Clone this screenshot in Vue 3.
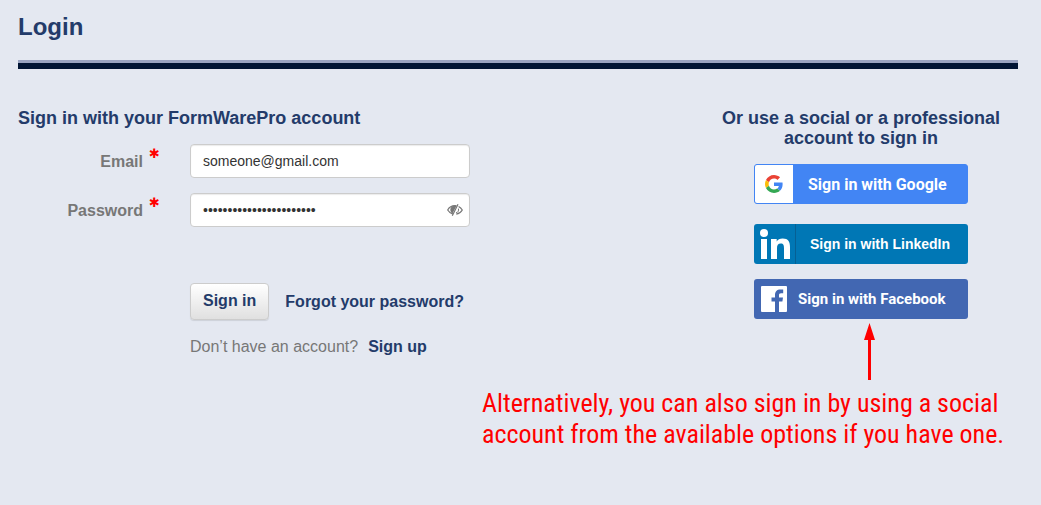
<script setup>
import { ref } from 'vue'

const email = ref('someone@gmail.com')
const password = ref('correcthorsebatterystap')
</script>

<template>
  <main class="page">
    <header class="head">
      <h1>Login</h1>
    </header>

    <div class="columns">
      <form class="account" @submit.prevent>
        <h2>Sign in with your FormWarePro account</h2>
        <div class="row">
          <label for="email">Email</label>
          <span class="star" aria-hidden="true">✱</span>
          <div class="field">
            <input id="email" v-model="email" type="text" />
          </div>
        </div>
        <div class="row">
          <label for="password">Password</label>
          <span class="star" aria-hidden="true">✱</span>
          <div class="field">
            <input id="password" v-model="password" type="password" />
            <button class="eye" type="button" aria-label="Show password">
              <svg viewBox="0 0 16 12" width="16" height="12">
                <path d="M6 10.100C3.500 9.500 1.700 7.700.7 6 2 3.600 4.700 1.700 8 1.700q.8 0 1.500.15M11.600 2.500C13.300 3.400 14.500 4.700 15.300 6c-1.300 2.300-3.300 3.800-6 4.200" fill="none" stroke="#777" stroke-width="1.200" />
                <path d="M9.500 2.100A4 4 0 0 0 5.500 9.500Z" fill="#777" />
                <path d="M11.400 4.600A3.600 3.600 0 0 1 9 8.900" fill="none" stroke="#777" stroke-width="1" />
                <path d="M11 .3 5.300 11.700" stroke="#777" stroke-width="1.200" />
              </svg>
            </button>
          </div>
        </div>
        <div class="actions">
          <button class="submit" type="submit">Sign in</button>
          <a href="#forgot">Forgot your password?</a>
        </div>
        <p class="signup">Don’t have an account?<a href="#signup">Sign up</a></p>
      </form>

      <section class="social">
        <h2>Or use a social or a professional account to sign in</h2>
        <button class="brand google" type="button">
          <span class="tile">
            <svg viewBox="0 0 48 48" width="18" height="18">
              <path fill="#ea4335" d="M24 9.500c3.540 0 6.710 1.220 9.210 3.600l6.850-6.850C35.900 2.380 30.470 0 24 0 14.620 0 6.510 5.380 2.560 13.220l7.980 6.190C12.430 13.720 17.740 9.500 24 9.500z" />
              <path fill="#4285f4" d="M46.980 24.550c0-1.570-.15-3.090-.38-4.550H24v9.020h12.940c-.58 2.960-2.260 5.480-4.780 7.180l7.730 6c4.510-4.180 7.090-10.360 7.090-17.650z" />
              <path fill="#fbbc05" d="M10.530 28.590c-.48-1.450-.76-2.990-.76-4.590s.27-3.140.76-4.590l-7.980-6.190C.92 16.460 0 20.120 0 24c0 3.880.92 7.540 2.560 10.780l7.970-6.190z" />
              <path fill="#34a853" d="M24 48c6.480 0 11.930-2.130 15.890-5.810l-7.730-6c-2.150 1.450-4.920 2.300-8.160 2.300-6.260 0-11.570-4.220-13.470-9.910l-7.980 6.190C6.510 42.620 14.620 48 24 48z" />
            </svg>
          </span>
          <span class="text">Sign in with Google</span>
        </button>
        <button class="brand linkedin" type="button">
          <span class="tile">
            <svg viewBox="0 0 30 30" width="30" height="30" fill="#fff">
              <circle cx="4" cy="4" r="4" />
              <path d="M1 10h6v20H1zM11 10h5.700v2.600c1-1.800 3.100-3.100 6-3.100 5.500 0 7.300 3.300 7.300 8.600V30h-6V19.200c0-2.700-.5-4.600-3.200-4.600-2.900 0-3.800 2-3.800 4.600V30h-6z" />
            </svg>
          </span>
          <span class="text">Sign in with LinkedIn</span>
        </button>
        <button class="brand facebook" type="button">
          <span class="tile">
            <svg viewBox="0 0 26 26" width="26" height="26">
              <rect width="26" height="26" rx="1" fill="#fff" />
              <path d="M14 26V15.500h-3.500v-4H14V9c0-3.500 2-5.500 5.300-5.500h2.900v3.700h-2.100c-1.700 0-2.100.9-2.100 2.200v2.100h4l-.6 4H18V26z" fill="#4267b2" />
            </svg>
          </span>
          <span class="text">Sign in with Facebook</span>
        </button>
        <svg class="arrow" viewBox="0 0 12 57" width="12" height="57" fill="#f00" aria-hidden="true">
          <path d="M5.500 0 11 17H7V57H4V17H0Z" />
        </svg>
      </section>
    </div>

    <p class="note">Alternatively, you can also sign in by using a social<br />account from the available options if you have one.</p>
  </main>
</template>

<style>
body {
  margin: 0;
  background: #e4e8f1;
}
</style>

<style scoped>
.page {
  padding: 12px 23px 24px 18px;
  font-family: "Liberation Sans", Arial, sans-serif;
  font-size: 16px;
  color: #777;
}

h1,
h2,
p {
  margin: 0;
}

h1,
h2,
a {
  color: #233b6a;
  font-weight: bold;
}

a {
  text-decoration: none;
}

h1 {
  font-size: 24px;
  line-height: 30px;
}

h2 {
  font-size: 18px;
  line-height: 20px;
}

button {
  padding: 0;
  border: 0;
  font-family: inherit;
  cursor: pointer;
}

.head {
  padding-bottom: 21px;
  border-bottom: 6px solid #001434;
  box-shadow: inset 0 -3px #99a3c1;
}

.columns {
  display: flex;
  justify-content: space-between;
  padding-top: 39px;
}

.account {
  width: 452px;
}

.row {
  display: flex;
  align-items: center;
  margin-bottom: 15px;
}

h2 + .row {
  margin-top: 16px;
}

.row label {
  width: 125px;
  padding-top: 2px;
  text-align: right;
  font-weight: bold;
}

.star {
  align-self: flex-start;
  width: 12px;
  margin: 3px 29px 0 6px;
  color: #f00;
  font-family: "DejaVu Sans", sans-serif;
  font-size: 13px;
  font-weight: bold;
  line-height: 14px;
}

.field {
  display: flex;
  align-items: center;
  box-sizing: border-box;
  flex: 1;
  height: 34px;
  padding: 0 6px 0 12px;
  border: 1px solid #ccc;
  border-radius: 4px;
  background: #fff;
  box-shadow: inset 0 1px 1px rgba(0, 0, 0, 0.08);
}

.field input {
  flex: 1;
  min-width: 0;
  padding: 0;
  border: 0;
  outline: 0;
  background: none;
  color: #333;
  font-family: inherit;
  font-size: 14px;
  line-height: 20px;
}

.eye {
  display: flex;
  background: none;
}

.actions {
  display: flex;
  align-items: center;
  gap: 16px;
  margin: 56px 0 0 172px;
}

.submit {
  height: 37px;
  padding: 0 12px 2px;
  border: 1px solid #ccc;
  border-radius: 4px;
  background: linear-gradient(#fff, #e0e0e0);
  box-shadow: 0 1px 1px rgba(0, 0, 0, 0.1);
  color: #233b6a;
  font-size: 16px;
  font-weight: bold;
}

.signup {
  margin: 17px 0 0 172px;
  line-height: 20px;
}

.signup a {
  margin-left: 10px;
}

.social {
  display: flex;
  flex-direction: column;
  align-items: center;
  width: 280px;
  margin-right: 17px;
  text-align: center;
}

.brand {
  display: flex;
  align-items: center;
  width: 214px;
  height: 40px;
  border-radius: 3px;
  overflow: hidden;
  color: #fff;
  font-family: Roboto, sans-serif;
  font-weight: bold;
}

.tile {
  display: flex;
  align-items: center;
  justify-content: center;
  box-sizing: border-box;
  height: 40px;
}

.google {
  margin-top: 16px;
  border: 1px solid #4285f4;
  background: #4285f4;
  font-size: 16px;
}

.google .tile {
  width: 38px;
  margin-right: 15px;
  background: #fff;
}

.linkedin {
  margin-top: 20px;
  background: #0077b5;
  font-family: "Liberation Sans", Arial, sans-serif;
  font-size: 14px;
}

.linkedin .tile {
  width: 42px;
  margin-right: 14px;
  border-right: 1px solid #066094;
}

.facebook {
  margin-top: 15px;
  background: #4267b2;
  font-size: 15px;
}

.facebook .tile {
  width: 40px;
  margin-right: 4px;
}

.arrow {
  margin: 4px 0 0 17px;
}

.note {
  width: 536px;
  margin: 8px 0 0 auto;
  color: #f00;
  font-family: "Roboto Condensed", "Liberation Sans Narrow", Roboto, sans-serif;
  font-size: 26px;
  line-height: 31px;
  white-space: nowrap;
}
</style>
